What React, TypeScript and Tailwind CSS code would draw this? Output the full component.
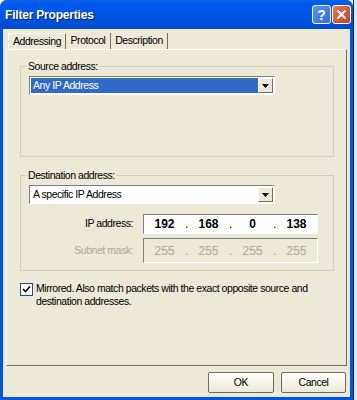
import React from "react";

const font = { fontFamily: '"Liberation Sans", Arial, sans-serif' };

const txt = "text-[10.5px] tracking-[-0.45px]";

function Combo({ text, selected }: { text: string; selected?: boolean }) {
  return (
    <div className="flex h-[19px] w-[246px] border border-t-[#7f7f7f] border-l-[#7f7f7f] border-r-white border-b-white bg-white p-[1px]">
      <div className={`flex flex-1 items-center pl-[2px] text-[10.5px] tracking-[-0.45px] ${selected ? "bg-[#316ac5] text-white" : "text-black"}`}>
        {text}
      </div>
      <div className="flex w-[15px] items-center justify-center border border-t-white border-l-white border-r-[#716f64] border-b-[#716f64] bg-[#ece9d8]">
        <svg width="7" height="4" viewBox="0 0 7 4"><path d="M0 0h7L3.5 4z" fill="#000" /></svg>
      </div>
    </div>
  );
}

function IpField({ values, disabled, h }: { values: string[]; disabled?: boolean; h: string }) {
  return (
    <div className={`flex ${h} w-[175px] items-center border border-t-[#7f7f7f] border-l-[#7f7f7f] border-r-white border-b-white ${disabled ? "bg-[#ece9d8] text-[#aca899]" : "bg-white text-black"}`}>
      {values.map((v, i) => (
        <React.Fragment key={i}>
          {i > 0 && <span className="w-[3px] text-center text-[12px]">.</span>}
          <span className={`w-[41px] text-center text-[12px] ${disabled ? "" : "font-semibold"}`}>{v}</span>
        </React.Fragment>
      ))}
    </div>
  );
}

export default function App() {
  return (
    <div className="flex h-[400px] w-[357px] bg-white" style={font}>
      <div className="flex h-[400px] w-[353px] flex-col rounded-t-[7px] bg-[#0054e3] px-[3px] pb-[3px]">
        <div className="-mx-[3px] flex h-[29px] items-center rounded-t-[7px] bg-[linear-gradient(#0a62e6,#0058ee_20%,#0054e3_60%,#0049cc)] pl-[5px] pr-[2px]">
          <span className="flex-1 text-[12px] font-bold tracking-[-0.2px] text-white [text-shadow:1px_1px_#0a1e6a]">Filter Properties</span>
          <div className="flex gap-[1px]">
            <div className="flex h-[19px] w-[19px] items-center justify-center rounded-[3px] border border-white bg-[linear-gradient(135deg,#5e93f5,#2e6ce0)] text-[14px] font-bold leading-none text-white">?</div>
            <div className="flex h-[19px] w-[19px] items-center justify-center rounded-[3px] border border-white bg-[linear-gradient(135deg,#e77b5c,#c7401f)]">
              <svg width="11" height="11" viewBox="0 0 11 11"><path d="M1.5 1.5l8 8M9.5 1.5l-8 8" stroke="#fff" strokeWidth="2" /></svg>
            </div>
          </div>
        </div>
        <div className="flex flex-1 flex-col bg-[#ece9d8] px-[3px] pt-[4px]">
          <div className={`flex h-[16px] items-stretch pl-[2px] ${txt} text-black`}>
            <div className="flex w-[58px] items-center justify-center border-l border-t border-white border-r border-r-[#716f64]">Addressing</div>
            <div className="flex w-[45px] items-center justify-center border-r border-r-[#716f64]">Protocol</div>
            <div className="flex w-[57px] items-center justify-center border-r border-r-[#716f64]">Description</div>
          </div>
          <div className="flex h-[317px] flex-col border border-l-white border-t-white border-r-[#716f64] border-b-[#716f64] pl-[13px] pt-[10px]">
            <fieldset className="h-[97px] w-[314px] border border-[#d0d0bf] pl-[8px] pt-[3px]">
              <legend className={`-ml-[2px] px-[1px] ${txt} leading-[13px] text-black`}>Source address:</legend>
              <Combo text="Any IP Address" selected />
            </fieldset>
            <fieldset className="mt-[12px] h-[102px] w-[314px] border border-[#d0d0bf] pl-[8px] pt-[3px]">
              <legend className={`-ml-[2px] px-[1px] ${txt} leading-[13px] text-black`}>Destination address:</legend>
              <Combo text="A specific IP Address" />
              <div className="mt-[10px] flex items-center">
                <span className={`w-[104px] text-right ${txt} text-black`}>IP address:</span>
                <div className="ml-[10px]"><IpField values={["192", "168", "0", "138"]} h="h-[20px]" /></div>
              </div>
              <div className="mt-[4px] flex items-center">
                <span className={`w-[104px] text-right ${txt} text-[#aca899]`}>Subnet mask:</span>
                <div className="ml-[10px]"><IpField values={["255", "255", "255", "255"]} disabled h="h-[25px]" /></div>
              </div>
            </fieldset>
            <div className="mt-[11px] flex items-start">
              <div className="mt-[1px] flex h-[13px] w-[13px] shrink-0 items-center justify-center border border-[#1c5180] bg-white">
                <svg width="9" height="9" viewBox="0 0 9 9"><path d="M1 4l2.5 2.5L8 1.5" stroke="#000" strokeWidth="1.6" fill="none" /></svg>
              </div>
              <div className={`ml-[3px] w-[290px] ${txt} leading-[13px] text-black`}>
                Mirrored. Also match packets with the exact opposite source and destination addresses.
              </div>
            </div>
          </div>
          <div className="mt-[6px] flex justify-end gap-[7px] pr-[1px]">
            <button className={`h-[21px] w-[66px] rounded-[2px] border border-[#6f6d62] bg-[linear-gradient(#fdfdfb,#ece9d8)] ${txt} text-black`}>OK</button>
            <button className={`h-[21px] w-[65px] rounded-[2px] border border-[#6f6d62] bg-[linear-gradient(#fdfdfb,#ece9d8)] ${txt} text-black`}>Cancel</button>
          </div>
        </div>
      </div>
      <div className="flex-1 border-l border-[#0a246a] bg-[#dfe6f4]" />
    </div>
  );
}
